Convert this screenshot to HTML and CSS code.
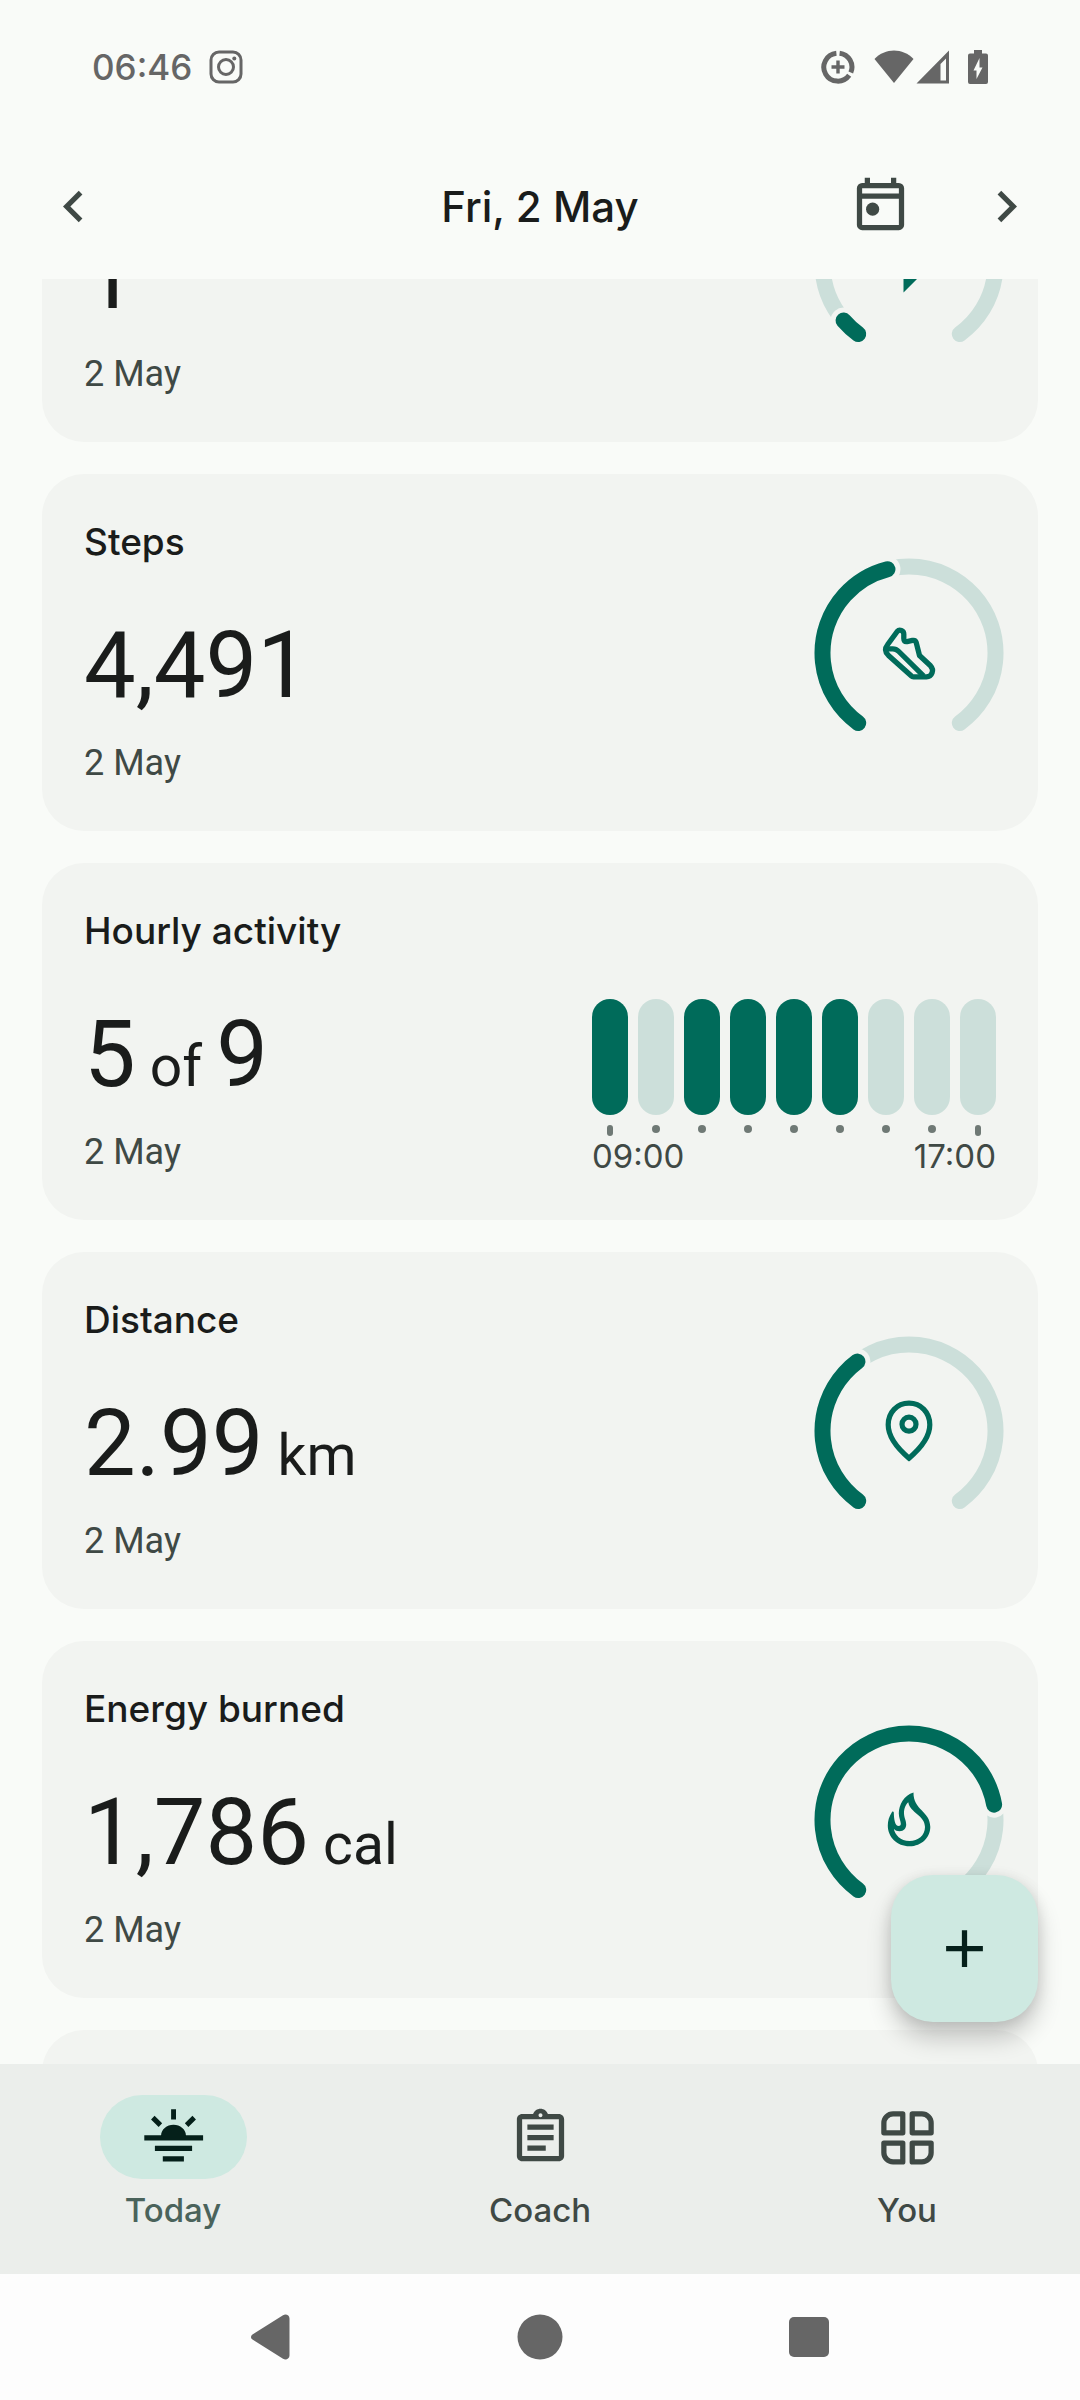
FILE: index.html
```
<!DOCTYPE html>
<html lang="en">
  <head>
    <meta charset="UTF-8" />
    <meta name="viewport" content="width=device-width, initial-scale=1.0" />
    <title>Today</title>
    <link rel="stylesheet" href="styles.css">
  </head>

  <body>
    <div class="status-bar">
      <div class="status-left">
        <span>06:46</span>
        <svg class="status-icon" viewBox="0 0 34 34" fill="none" stroke="currentColor" stroke-width="3">
          <rect x="2" y="2" width="30" height="30" rx="8" />
          <circle cx="17" cy="17" r="7.5" />
          <circle cx="25.3" cy="8.5" r="2" fill="currentColor" stroke="none" />
        </svg>
      </div>
      <div class="status-right">
        <svg class="status-icon data-saver" viewBox="0 0 34 34" fill="none" stroke="currentColor" stroke-width="5">
          <path d="M18.6 3.2a14 14 0 0 1 11.2 19.4M28.2 25.3A14 14 0 1 1 15.4 3.2" />
          <path d="M17 10.5v13M10.5 17h13" stroke-width="3.4" />
        </svg>
        <svg class="wifi" viewBox="0 0 40 34" fill="currentColor">
          <path d="M20 33L.5 9C11-2.5 29-2.5 39.5 9z" />
        </svg>
        <svg class="status-icon signal" viewBox="0 0 34 34" fill="currentColor">
          <path fill-rule="evenodd" d="M.5 33.5L33 .5v33zM24.500 14v16.5H30V8.5z" />
        </svg>
        <svg class="battery" viewBox="0 0 20 34" fill="currentColor">
          <path fill-rule="evenodd" d="M6 0h8v3.5h4a2 2 0 0 1 2 2V32a2 2 0 0 1-2 2H2a2 2 0 0 1-2-2V5.5a2 2 0 0 1 2-2h4zM11.5 8L5.5 20.5h3V29l6-11.5h-3z" />
        </svg>
      </div>
    </div>

    <header class="header">
      <button class="icon-button" aria-label="Previous day">
        <svg viewBox="0 0 24 24"><path d="M15.4 7.4L14 6l-6 6 6 6 1.4-1.4-4.6-4.6z" /></svg>
      </button>
      <h1>Fri, 2 May</h1>
      <div class="header-actions">
        <button class="icon-button" aria-label="Pick a date">
          <svg viewBox="0 0 24 24">
            <path fill-rule="evenodd" d="M19 3h-1V1h-2v2H8V1H6v2H5a2 2 0 0 0-2 2v14a2 2 0 0 0 2 2h14a2 2 0 0 0 2-2V5a2 2 0 0 0-2-2zM5 5h14v2H5zM5 9h14v10H5z" />
            <circle cx="9" cy="13" r="2.5" />
          </svg>
        </button>
        <button class="icon-button" aria-label="Next day">
          <svg viewBox="0 0 24 24"><path d="M8.6 16.6l4.6-4.6-4.6-4.6L10 6l6 6-6 6z" /></svg>
        </button>
      </div>
    </header>

    <main class="feed">
      <div class="cards">
        <section class="card" aria-label="Zone minutes">
          <div class="card-text">
            <p class="value">1</p>
            <p class="date">2 May</p>
          </div>
          <div class="gauge">
            <svg class="dial" viewBox="-95 -95 190 190">
              <path class="track" d="M-50.8 70A86.5 86.5 0 1 1 50.8 70" />
              <path class="gap" pathLength="100" stroke-dasharray="4.6 200" d="M-50.8 70A86.5 86.5 0 1 1 50.8 70" />
              <path class="fill" pathLength="100" stroke-dasharray="4.6 200" d="M-50.8 70A86.5 86.5 0 1 1 50.8 70" />
            </svg>
            <svg class="gauge-icon" viewBox="0 0 66 66">
              <path fill="currentColor" d="M27.5 61.5V40H16L38 6v20h25z" />
            </svg>
          </div>
        </section>

        <section class="card">
          <div class="card-text">
            <h2>Steps</h2>
            <p class="value">4,491</p>
            <p class="date">2 May</p>
          </div>
          <div class="gauge">
            <svg class="dial" viewBox="-95 -95 190 190">
              <path class="track" d="M-50.8 70A86.5 86.5 0 1 1 50.8 70" />
              <path class="gap" pathLength="100" stroke-dasharray="45 200" d="M-50.8 70A86.5 86.5 0 1 1 50.8 70" />
              <path class="fill" pathLength="100" stroke-dasharray="45 200" d="M-50.8 70A86.5 86.5 0 1 1 50.8 70" />
            </svg>
            <svg class="gauge-icon" viewBox="0 0 66 66" fill="none" stroke="currentColor" stroke-width="5.3" stroke-linejoin="round">
              <path d="M21.2 11.5C23.5 8.8 27.8 10.5 27.8 14v4.5c0 2.3 1 3.6 3.2 3.1l5.5-1.2c2-.4 3.3.6 3.8 2.4l3.2 12.7 11 10.3C58.5 50 56 56.8 50.5 56.8h-13c-1 0-1.6-.3-2.3-1L12.5 35.5C9 32 8.5 28.5 11.5 24.8z" />
              <path d="M10 28.8h6.8c2.4 0 4.3 1 6 2.7l24.7 24.3" />
            </svg>
          </div>
        </section>

        <section class="card">
          <div class="card-text">
            <h2>Hourly activity</h2>
            <p class="value">5<small> of </small>9</p>
            <p class="date">2 May</p>
          </div>
          <div class="hours">
            <div class="hour-bars">
              <span class="hour active"></span>
              <span class="hour"></span>
              <span class="hour active"></span>
              <span class="hour active"></span>
              <span class="hour active"></span>
              <span class="hour active"></span>
              <span class="hour"></span>
              <span class="hour"></span>
              <span class="hour"></span>
            </div>
            <div class="hour-labels"><span>09:00</span><span>17:00</span></div>
          </div>
        </section>

        <section class="card">
          <div class="card-text">
            <h2>Distance</h2>
            <p class="value">2.99<small> km</small></p>
            <p class="date">2 May</p>
          </div>
          <div class="gauge">
            <svg class="dial" viewBox="-95 -95 190 190">
              <path class="track" d="M-50.8 70A86.5 86.5 0 1 1 50.8 70" />
              <path class="gap" pathLength="100" stroke-dasharray="37.3 200" d="M-50.8 70A86.5 86.5 0 1 1 50.8 70" />
              <path class="fill" pathLength="100" stroke-dasharray="37.3 200" d="M-50.8 70A86.5 86.5 0 1 1 50.8 70" />
            </svg>
            <svg class="gauge-icon" viewBox="0 0 66 66" fill="none" stroke="currentColor" stroke-width="5.2">
              <path d="M33 5.2C21 5.2 12.2 14.5 12.2 26.8 12.2 38 21 50 33 60.2 45 50 53.8 38 53.8 26.8 53.8 14.5 45 5.2 33 5.2z" />
              <circle cx="33" cy="26.2" r="7" />
            </svg>
          </div>
        </section>

        <section class="card">
          <div class="card-text">
            <h2>Energy burned</h2>
            <p class="value">1,786<small> cal</small></p>
            <p class="date">2 May</p>
          </div>
          <div class="gauge">
            <svg class="dial" viewBox="-95 -95 190 190">
              <path class="track" d="M-50.8 70A86.5 86.5 0 1 1 50.8 70" />
              <path class="gap" pathLength="100" stroke-dasharray="77.7 200" d="M-50.8 70A86.5 86.5 0 1 1 50.8 70" />
              <path class="fill" pathLength="100" stroke-dasharray="77.7 200" d="M-50.8 70A86.5 86.5 0 1 1 50.8 70" />
            </svg>
            <svg class="gauge-icon" viewBox="0 0 66 66">
              <path fill="currentColor" fill-rule="evenodd" d="M37.5 5.5C28 8 22.8 18 22.8 26.5c0 4.5 2 7.5 2 10.3 0 1.5-1 2.2-2 2.2-3.8 0-4.8-6-5-13.5-.2-1.2-1.2-1.2-1.8-.5-3 4.5-4.2 9-4.2 13.5 0 11.5 9.2 20.8 21.7 20.8S54.3 50 54.3 40C54.3 24 37 23 37.5 5.5zM17.8 41.8c1.5 1.8 3.5 2.4 5.7 2.4 4.5 0 6.7-3.2 6.7-6.7C30.2 33 28 31 28 26c0-5 2-9 4.3-10.8C34 26 49 28 49 40c0 8.500-7 14-15.500 14-9 0-14.500-6-15.700-12.200z" />
            </svg>
          </div>
        </section>

        <section class="card"></section>
      </div>

      <button class="fab" aria-label="Add">
        <svg viewBox="0 0 24 24"><path d="M19 13h-6v6h-2v-6H5v-2h6V5h2v6h6z" /></svg>
      </button>
    </main>

    <nav class="tabs">
      <a href="#today" class="tab selected">
        <span class="tab-icon">
          <svg viewBox="0 0 63 63">
            <path d="M2.3 29.3h16.8a12.4 10.5 0 0 1 24.8 0h17.2v5.2H2.3zM12.9 39.8h37.2v5.3H12.9zM20.8 50.3h21.1v5.2H20.8zM29.1 3.2h4.9v10.4h-4.9z" />
            <path d="M10.8 11.6l7.6 7.5M52.2 11.6l-7.6 7.5" stroke="currentColor" stroke-width="5" />
          </svg>
        </span>
        Today
      </a>
      <a href="#coach" class="tab">
        <span class="tab-icon">
          <svg viewBox="0 0 24 24">
            <path d="M7 15h7v2H7zm0-4h10v2H7zm0-4h10v2H7zm12-4h-4.18C14.4 1.84 13.3 1 12 1c-1.3 0-2.4.84-2.82 2H5c-1.1 0-2 .9-2 2v14c0 1.1.9 2 2 2h14c1.1 0 2-.9 2-2V5c0-1.1-.9-2-2-2zm-7-.25c.41 0 .75.34.75.75s-.34.75-.75.75-.75-.34-.75-.75.34-.75.75-.75zM19 19H5V5h14v14z" />
          </svg>
        </span>
        Coach
      </a>
      <a href="#you" class="tab">
        <span class="tab-icon">
          <svg viewBox="0 0 24 24">
            <g fill="none" stroke="currentColor" stroke-width="2" stroke-linejoin="round">
              <path d="M10.2 3H6.5A3.5 3.5 0 0 0 3 6.5v3.7h7.2z" />
              <path d="M13.8 3h3.7A3.5 3.5 0 0 1 21 6.5v3.7h-7.2z" />
              <path d="M10.2 21.3H6.5A3.5 3.5 0 0 1 3 17.8v-3.7h7.2z" />
              <path d="M13.8 21.3h3.7a3.5 3.5 0 0 0 3.5-3.5v-3.7h-7.2z" />
            </g>
          </svg>
        </span>
        You
      </a>
    </nav>

    <div class="system-nav">
      <button aria-label="Back">
        <svg viewBox="0 0 48 48"><path d="M5.5 21.4L36 2.2c3-1.6 6.5 0 6.5 3.3v37c0 3.3-3.5 4.9-6.5 3.3L5.5 26.6c-2-1.4-2-3.8 0-5.2z" /></svg>
      </button>
      <button aria-label="Home">
        <svg viewBox="0 0 48 48"><circle cx="24" cy="24" r="22.5" /></svg>
      </button>
      <button aria-label="Recent apps">
        <svg viewBox="0 0 48 48"><rect x="4" y="4" width="40" height="40" rx="5" /></svg>
      </button>
    </div>
  </body>
</html>
```
FILE: styles.css
```
* {
  box-sizing: border-box;
}

body {
  margin: 0;
  height: 100vh;
  display: flex;
  flex-direction: column;
  font-family: Inter, sans-serif;
  font-size: 36px;
  color: #1a1c1b;
  background-color: #f9fbf8;
}

h1,
h2,
p {
  margin: 0;
  font-weight: 500;
}

button {
  padding: 0;
  border: none;
  background: none;
  color: inherit;
  cursor: pointer;
}

svg {
  display: block;
  fill: currentColor;
}

svg[fill="none"] {
  fill: none;
}

/* Status bar */
.status-bar {
  display: flex;
  justify-content: space-between;
  align-items: center;
  height: 134px;
  padding: 0 92px;
  color: #666;
  font-size: 35px;
  font-weight: 500;
}

.status-left,
.status-right {
  display: flex;
  align-items: center;
}

.status-left {
  gap: 17px;
}

.status-icon {
  width: 34px;
  height: 34px;
}

.wifi {
  width: 40px;
  height: 34px;
  margin-left: 19px;
}

.signal {
  margin-left: 2px;
}

.battery {
  width: 20px;
  height: 34px;
  margin-left: 18px;
}

/* Date header */
.header {
  display: grid;
  grid-template-columns: 1fr auto 1fr;
  align-items: center;
  height: 145px;
  padding: 0 42px;
  color: #3f4945;
}

.header h1 {
  font-size: 42px;
  color: #1a1c1b;
}

.header-actions {
  display: flex;
  justify-content: flex-end;
  gap: 63px;
}

.icon-button {
  width: 63px;
  height: 63px;
}

/* Cards */
.feed {
  position: relative;
  flex: 1;
  min-height: 0;
}

.cards {
  height: 100%;
  display: flex;
  flex-direction: column;
  gap: 32px;
  padding: 0 42px;
  overflow: hidden;
}

.card {
  flex: none;
  display: flex;
  justify-content: space-between;
  align-items: center;
  min-height: 357px;
  padding: 42px 34px 42px 42px;
  border-radius: 42px;
  background-color: #f2f4f1;
}

/* list is scrolled part way past the first card */
.card:first-child {
  margin-top: -194px;
}

.card-text {
  align-self: flex-end;
}

.card h2 {
  margin-bottom: 46px;
  font-size: 37px;
  line-height: 52px;
}

.value {
  margin-bottom: 19px;
  font-family: Roboto, sans-serif;
  font-size: 92px;
  font-weight: 400;
  line-height: 104px;
}

.value small {
  font-size: 57px;
  line-height: 57px;
}

.date {
  font-family: Roboto, sans-serif;
  font-weight: 400;
  line-height: 52px;
  color: #3f4945;
}

/* Gauges */
.gauge {
  display: grid;
  place-items: center;
  color: #006b5a;
}

.dial,
.gauge-icon {
  grid-area: 1 / 1;
}

.dial {
  width: 190px;
}

.gauge-icon {
  width: 66px;
}

.dial path {
  fill: none;
  stroke-width: 16;
  stroke-linecap: round;
}

.dial .track {
  stroke: #ccdfda;
}

.dial .gap {
  stroke: #f2f4f1;
  stroke-width: 26;
}

.dial .fill {
  stroke: currentColor;
}

/* Hourly activity chart */
.hours {
  margin-right: 8px;
  padding-top: 92px;
}

.hour-bars {
  display: flex;
  gap: 10px;
}

.hour::before {
  content: "";
  display: block;
  width: 36px;
  height: 116px;
  border-radius: 18px;
  background-color: #ccdfda;
}

.hour.active::before {
  background-color: #006b5a;
}

.hour::after {
  content: "";
  display: block;
  width: 8px;
  height: 8px;
  margin: 10px auto 3px;
  border-radius: 4px;
  background-color: #6f7975;
}

.hour:first-child::after,
.hour:last-child::after {
  width: 6px;
  height: 11px;
  margin-bottom: 0;
}

.hour-labels {
  display: flex;
  justify-content: space-between;
  font-size: 33px;
  line-height: 40px;
  color: #3f4945;
}

/* Floating add button */
.fab {
  position: absolute;
  right: 42px;
  bottom: 42px;
  display: grid;
  place-items: center;
  width: 147px;
  height: 147px;
  border-radius: 42px;
  color: #05201a;
  background-color: #cee9e1;
  box-shadow: 0 16px 24px rgba(0, 0, 0, 0.2), 0 2px 14px rgba(0, 0, 0, 0.1);
}

.fab svg {
  width: 63px;
}

/* Bottom tabs */
.tabs {
  display: grid;
  grid-template-columns: repeat(3, 1fr);
  gap: 21px;
  height: 210px;
  padding-top: 31px;
  background-color: #ebeeeb;
}

.tab {
  display: flex;
  flex-direction: column;
  align-items: center;
  gap: 10px;
  font-size: 33px;
  line-height: 42px;
  font-weight: 500;
  color: #3f4945;
  text-decoration: none;
}

.tab-icon {
  display: grid;
  place-items: center;
  width: 147px;
  height: 84px;
  border-radius: 42px;
}

.tab-icon svg {
  width: 63px;
}

.tab.selected {
  color: #4a635b;
}

.selected .tab-icon {
  color: #05201a;
  background-color: #cee9e1;
}

/* System navigation */
.system-nav {
  display: grid;
  grid-template-columns: repeat(3, 1fr);
  place-items: center;
  height: 126px;
  padding: 0 136px;
  color: #666;
  background-color: #fdfdfd;
}

.system-nav svg {
  width: 48px;
}
```
